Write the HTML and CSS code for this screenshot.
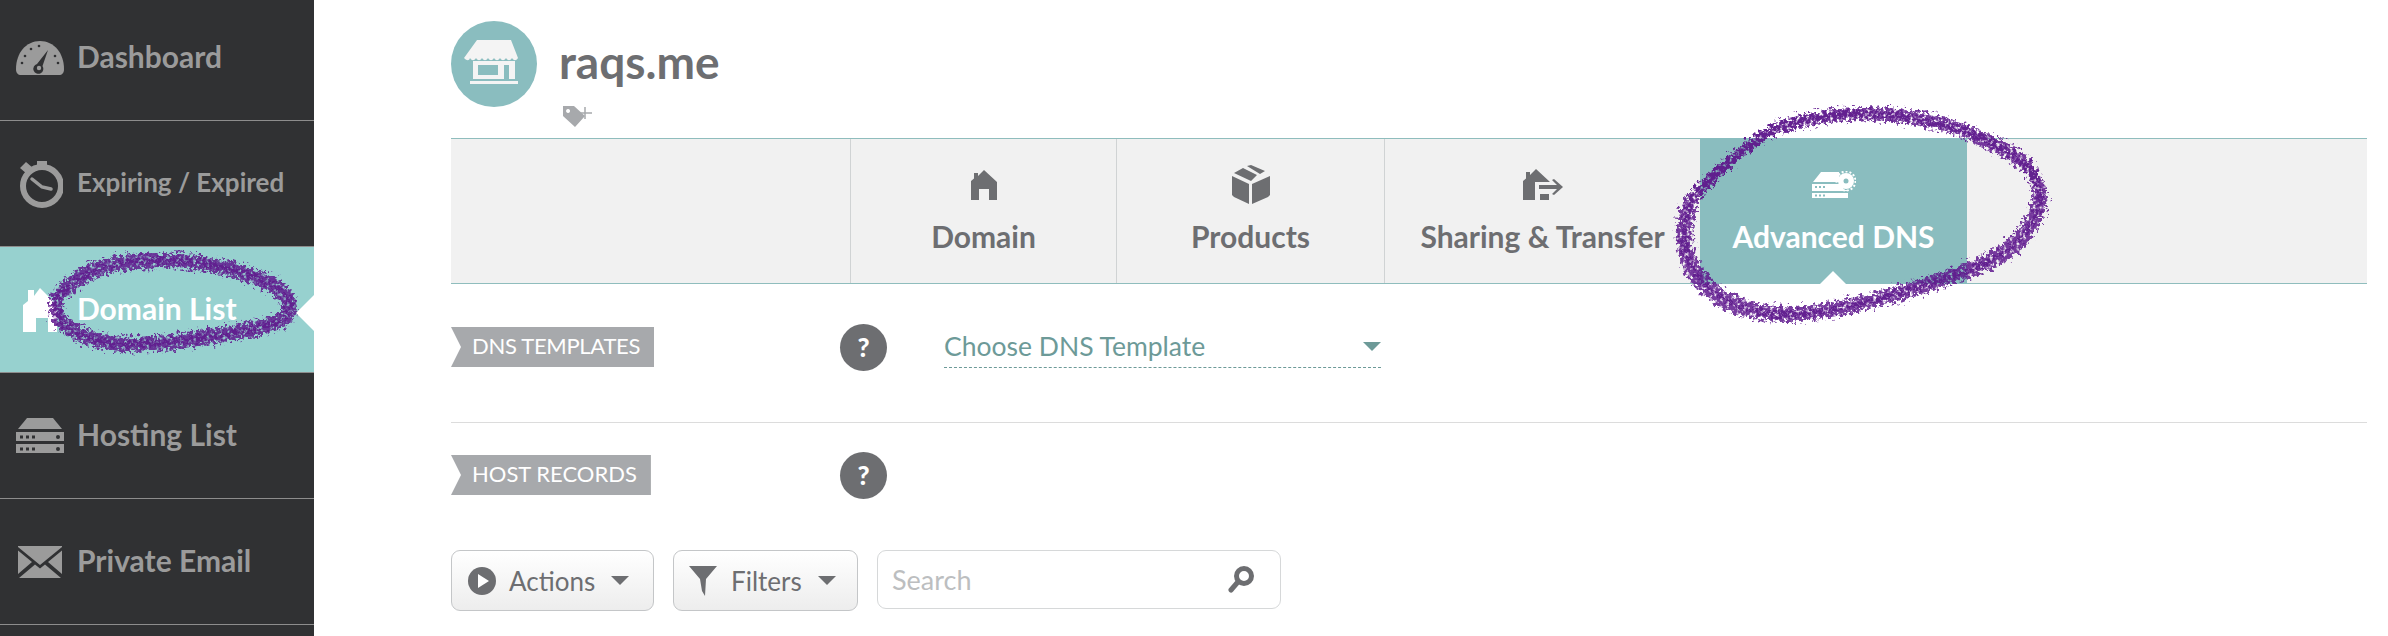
FILE: index.html
```html
<!DOCTYPE html>
<html>
<head>
    <meta charset="utf-8">
    <title>raqs.me - Advanced DNS</title>
    <link rel="stylesheet" href="styles.css">
</head>
<body>
    <nav class="sidebar">
        <a class="side-item first">
            <span class="side-icon">
                <svg width="50" height="36" viewBox="0 0 50 36"><path class="gray" d="M1 29C1 13 11 1 25 1s24 12 24 28c0 4-2 6-5 6H6c-3 0-5-2-5-6z"/><path class="dark" d="M33 10 27.500 26a5 5 0 1 1-5.500-2z"/><circle class="gray" cx="24" cy="28" r="2.200"/><g class="dark"><circle cx="7" cy="23" r="1.300"/><circle cx="10" cy="16" r="1.300"/><circle cx="16" cy="9" r="1.300"/><circle cx="24" cy="6" r="1.300"/><circle cx="40" cy="16" r="1.300"/><circle cx="43" cy="23" r="1.300"/></g></svg>
            </span>
            <span class="side-label">Dashboard</span>
        </a>
        <a class="side-item small">
            <span class="side-icon">
                <svg width="46" height="48" viewBox="0 0 46 48"><circle cx="25" cy="26" r="19" fill="none" stroke="#9b9b9b" stroke-width="6"/><path class="gray" d="M20 1h10v8H20zM3 8l6-6 7 6-6 6z"/><path d="M15 19l10 8 9 2" fill="none" stroke="#9b9b9b" stroke-width="3.500" stroke-linecap="round"/></svg>
            </span>
            <span class="side-label">Expiring / Expired</span>
        </a>
        <a class="side-item active">
            <span class="side-icon">
                <svg width="34" height="44" viewBox="0 0 34 44"><path fill="#fff" d="M0 44V17L5 13V2H11V8L17 0 34 17V44H25V30H13V44z"/></svg>
            </span>
            <span class="side-label">Domain List</span>
        </a>
        <a class="side-item">
            <span class="side-icon">
                <svg width="48" height="36" viewBox="0 0 48 36"><path class="gray" d="M11 0H37L46 11H2z"/><path class="gray" d="M0 14H48V23H0zM0 26H48V35H0z"/><g class="dark"><path d="M4 17.500h3v3H4zM10 17.500h3v3h-3zM16 17.500h3v3h-3zM4 29.500h3v3H4zM10 29.500h3v3h-3zM16 29.500h3v3h-3z"/><circle cx="42" cy="19" r="2"/><circle cx="42" cy="31" r="2"/></g></svg>
            </span>
            <span class="side-label">Hosting List</span>
        </a>
        <a class="side-item">
            <span class="side-icon">
                <svg width="44" height="32" viewBox="0 0 44 32"><path class="gray" d="M0 0H44V1L22 19 0 1zM0 4.500 14 16 0 28zM44 4.500 30 16 44 28zM17 18.500 22 22.500 27 18.500 43 32H1z"/></svg>
            </span>
            <span class="side-label">Private Email</span>
        </a>
    </nav>

    <main class="content">
        <header class="domain-head">
            <span class="domain-badge">
                <svg width="86" height="86" viewBox="0 0 86 86"><path fill="#f4f4f4" d="M26 19H60L67 37c-2 3-4 3-6 0-2 3-4 3-6 0-2 3-4 3-6 0-2 3-4 3-6 0-2 3-4 3-6 0-2 3-4 3-6 0-2 3-4 3-6 0-2 3-4 3-6 0-1 3-3 3-6 0z"/><path fill="#f4f4f4" d="M22 40H64V58H58V44H53V58H22zM27 44V54H47V44z"/><path fill="#f4f4f4" d="M19 60H67V63H19z"/></svg>
            </span>
            <div class="domain-name">
                <h1>raqs.me</h1>
                <svg class="tag-add" width="32" height="24" viewBox="0 0 32 24"><path fill="#a7a9ac" d="M1 1H12L23 11 13 22 1 11zM6 4a2 2 0 1 0 .1 0z"/><path stroke="#a7a9ac" stroke-width="1.500" d="M23 2V14M17 8H30"/></svg>
            </div>
        </header>

        <div class="tabs">
            <div class="tab tab-empty"></div>
            <a class="tab">
                <span class="tab-icon">
                    <svg width="28" height="32" viewBox="0 0 28 32"><path class="tab-fill" d="M1 31V12L4 9.500V4H8V7L14 1 27 13V31H19V20H9V31z"/></svg>
                </span>
                <span>Domain</span>
            </a>
            <a class="tab">
                <span class="tab-icon">
                    <svg width="38" height="40" viewBox="0 0 38 40"><path class="tab-fill" d="M0 11 17 19V39L2 32 0 30zM38 11 20 19V39L36 32 38 30z"/><path class="tab-fill" d="M15 1 19 0 33 6 28 9zM11 3 25 10 19 16 2 8z"/></svg>
                </span>
                <span>Products</span>
            </a>
            <a class="tab">
                <span class="tab-icon">
                    <svg width="40" height="32" viewBox="0 0 40 32"><path class="tab-fill" d="M0 31V12L3 9.500V3H7V6L13 0 27 13H12V31zM17 25H26V31H17z"/><path class="tab-fill" d="M16 16H34L29 11 31 10 40 18 31 26 29 25 34 20H16z"/></svg>
                </span>
                <span>Sharing &amp; Transfer</span>
            </a>
            <a class="tab current">
                <span class="tab-icon">
                    <svg width="44" height="28" viewBox="0 0 44 28"><path fill="#fff" d="M9 1H27V3L28 11H1zM0 13H29L32 19H36V20H0zM0 22H36V27H0z"/><g fill="#8abdbf"><path d="M3 15h2v2H3zM7 15h2v2H7zM11 15h2v2h-2zM3 23.500h2v2H3zM7 23.500h2v2H7zM11 23.500h2v2h-2z"/></g><circle cx="34" cy="10" r="8" fill="#fff"/><circle cx="34" cy="10" r="9.500" fill="none" stroke="#fff" stroke-width="2" stroke-dasharray="2 2"/><circle cx="34" cy="10" r="2.500" fill="#8abdbf"/></svg>
                </span>
                <span>Advanced DNS</span>
            </a>
            <div class="tab-rest"></div>
        </div>

        <section class="row row-templates">
            <span class="ribbon">DNS TEMPLATES</span>
            <span class="help">?</span>
            <div class="dns-select">
                <span>Choose DNS Template</span>
                <i class="caret caret-teal"></i>
            </div>
        </section>

        <section class="row row-records">
            <span class="ribbon">HOST RECORDS</span>
            <span class="help">?</span>
        </section>

        <div class="toolbar">
            <button class="btn btn-actions">
                <svg width="28" height="28" viewBox="0 0 28 28"><circle cx="14" cy="14" r="14" fill="#6d6e71"/><path fill="#fff" d="M10 7 21 14 10 21z"/></svg>
                <span>Actions</span>
                <i class="caret"></i>
            </button>
            <button class="btn btn-filters">
                <svg width="28" height="30" viewBox="0 0 28 30"><path fill="#6d6e71" d="M0 0H28L17 13 16 30 13 25 11 13z"/></svg>
                <span>Filters</span>
                <i class="caret"></i>
            </button>
            <div class="search">
                <span>Search</span>
                <svg width="26" height="28" viewBox="0 0 26 28"><circle cx="16" cy="10" r="7.500" fill="none" stroke="#6d6e71" stroke-width="5"/><path d="M9 17 3 24" stroke="#6d6e71" stroke-width="5" stroke-linecap="round"/></svg>
            </div>
        </div>
    </main>

    <!-- marker scribbles drawn on top of the screenshot -->
    <svg class="scribbles" width="2388" height="636" viewBox="0 0 2388 636">
        <defs>
            <filter id="rough" x="-10%" y="-10%" width="120%" height="120%">
                <feTurbulence type="fractalNoise" baseFrequency="0.3" numOctaves="3" seed="4" result="noise"/>
                <feDisplacementMap in="SourceGraphic" in2="noise" scale="16" xChannelSelector="R" yChannelSelector="G" result="moved"/>
                <feColorMatrix in="noise" type="matrix" values="0 0 0 0 0  0 0 0 0 0  0 0 0 0 0  0 0 0 3.600 -0.700" result="mask"/>
                <feComposite in="moved" in2="mask" operator="in"/>
                <feGaussianBlur stdDeviation="0.700"/>
            </filter>
        </defs>
        <g class="scribble" filter="url(#rough)">
            <path d="M55 297C68 280 82 272 93 267 118 258 140 258 160 258 190 258 212 262 233 267 256 273 270 280 280 287 288 294 292 300 292 307 292 314 289 319 283 323 262 331 240 335 217 338 190 343 160 346 133 347 115 347 100 345 87 340 72 334 62 328 57 320 54 312 53 304 55 297Z"/>
            <path d="M58 300C72 284 86 277 98 272 120 264 142 263 162 263 190 263 212 266 232 272 252 278 266 284 276 291 284 298 287 303 287 308 286 314 282 318 276 320 258 326 238 330 215 333 188 338 160 341 135 342 116 342 102 340 90 336 76 330 66 324 61 317 57 310 56 305 58 300Z"/>
            <path d="M1690 200C1715 172 1745 146 1773 130 1805 120 1835 115 1867 115 1900 116 1930 122 1957 130 1982 140 2002 150 2017 160 2033 172 2042 185 2043 197 2042 212 2032 232 2017 247 2000 260 1980 270 1957 277 1930 287 1900 296 1873 303 1845 310 1815 316 1790 317 1765 317 1740 312 1723 303 1700 290 1686 270 1683 250 1680 232 1682 214 1690 200Z"/>
            <path d="M1695 197C1720 168 1750 142 1778 127 1808 117 1838 111 1870 112 1902 113 1932 118 1960 127 1986 137 2006 148 2021 158 2036 170 2038 190 2037 200 2035 214 2026 230 2011 243 1996 256 1976 266 1953 273 1926 283 1896 292 1869 299 1841 306 1815 311 1792 312 1768 312 1746 306 1728 298 1706 285 1692 266 1688 248 1686 232 1688 212 1695 197Z"/>
        </g>
    </svg>
</body>
</html>
```

FILE: styles.css
```css
body {
    margin: 0;
    background: white;
    font-family: Lato, 'Open Sans', sans-serif;
    display: flex;
    width: 2388px;
    height: 636px;
    overflow: hidden;
    color: #6d6e71;
}

.gray {
    fill: #9b9b9b;
}

.dark {
    fill: #303133;
}

/* sidebar */
.sidebar {
    width: 314px;
    height: 636px;
    flex-shrink: 0;
    background: #303133;
    display: flex;
    flex-direction: column;
    overflow: hidden;
}

.side-item {
    height: 125px;
    flex-shrink: 0;
    border-bottom: 1px solid #8d8d8d;
    display: grid;
    grid-template-columns: 77px 1fr;
    align-items: center;
    font-size: 30px;
    font-weight: 700;
    color: #9b9b9b;
    position: relative;
}

.side-label {
    padding-bottom: 4px;
}

.side-item.first {
    height: 115px;
    padding-bottom: 5px;
}

.side-item.small {
    font-size: 26px;
}

.side-item.active {
    background: #97d1cf;
    color: white;
}

.side-item.active::after {
    content: '';
    position: absolute;
    right: 0;
    top: 48px;
    border: 18px solid transparent;
    border-left: 0;
    border-right-color: white;
}

.side-icon {
    display: flex;
    justify-content: center;
    padding-left: 2px;
}

/* heading */
.content {
    flex: 1;
    min-width: 0;
    height: 636px;
    padding: 21px 21px 0 137px;
}

.domain-head {
    display: flex;
    gap: 22px;
    height: 117px;
}

.domain-badge {
    width: 86px;
    height: 86px;
    border-radius: 50%;
    background: #8abdbf;
}

.domain-name h1 {
    margin: 15px 0 0 0;
    font-size: 46px;
    line-height: 52px;
    font-weight: 700;
}

.tag-add {
    display: block;
    margin: 17px 0 0 3px;
}

/* tabs */
.tabs {
    display: flex;
    height: 144px;
    background: #f1f1f1;
    border-top: 1px solid #8fbdbd;
    border-bottom: 1px solid #8fbdbd;
}

.tab {
    width: 266px;
    box-sizing: border-box;
    border-right: 1px solid #d0d3d4;
    display: flex;
    flex-direction: column;
    align-items: center;
    font-size: 30px;
    font-weight: 700;
    position: relative;
    white-space: nowrap;
}

.tab-empty {
    width: 400px;
}

.tab:nth-child(3) {
    width: 268px;
}

.tab:nth-child(4) {
    width: 315px;
    border-right: 0;
}

.tab.current {
    width: 267px;
    background: #8abdbf;
    color: white;
    border-right: 0;
    margin-top: -1px;
    margin-bottom: -1px;
    padding-top: 1px;
}

.tab.current::after {
    content: '';
    position: absolute;
    bottom: 0;
    left: 120px;
    border: 13px solid transparent;
    border-top: 0;
    border-bottom-color: white;
}

.tab-icon {
    height: 42px;
    margin-top: 25px;
    margin-bottom: 12px;
    display: flex;
    align-items: center;
}

.tab-fill {
    fill: #6d6e71;
}

.tab-rest {
    flex: 1;
}

/* rows */
.row {
    display: grid;
    grid-template-columns: 389px 104px 437px;
    align-items: start;
}

.row-templates {
    height: 138px;
    border-bottom: 1px solid #dcdcdc;
}

.row-templates .help {
    margin-top: 40px;
}

.row-records {
    height: 127px;
}

.row-records .help {
    margin-top: 29px;
}

.ribbon {
    justify-self: start;
    height: 40px;
    box-sizing: border-box;
    padding: 0 14px 0 21px;
    background: #a7a9ac;
    color: white;
    font-size: 22px;
    line-height: 38px;
    clip-path: polygon(0 0, 100% 0, 100% 100%, 0 100%, 10px 50%);
}

.row-templates .ribbon {
    margin-top: 43px;
    letter-spacing: -0.300px;
}

.row-records .ribbon {
    margin-top: 32px;
}

.help {
    width: 47px;
    height: 47px;
    border-radius: 50%;
    background: #6d6e71;
    color: white;
    font-weight: 900;
    font-size: 26px;
    line-height: 47px;
    text-align: center;
}

.dns-select {
    height: 42px;
    margin-top: 41px;
    border-bottom: 1px dashed #6d9a98;
    color: #6d9a98;
    font-size: 26.500px;
    line-height: 40px;
    display: flex;
    justify-content: space-between;
    align-items: center;
}

.caret {
    width: 0;
    height: 0;
    border-left: 9px solid transparent;
    border-right: 9px solid transparent;
    border-top: 9px solid #6d6e71;
}

.caret-teal {
    border-top-color: #6d9a98;
}

/* toolbar */
.toolbar {
    display: flex;
    align-items: flex-start;
    gap: 19px;
}

.btn {
    height: 61px;
    box-sizing: border-box;
    border: 1px solid #c4c6c8;
    border-radius: 9px;
    background: linear-gradient(#ffffff, #ededed);
    display: flex;
    align-items: center;
    padding: 0;
    font-family: inherit;
    font-size: 26px;
    color: #6d6e71;
}

.btn-actions {
    width: 203px;
    padding-left: 16px;
}

.btn-actions span {
    margin: 0 16px 0 13px;
}

.btn-filters {
    width: 185px;
    padding-left: 15px;
}

.btn-filters span {
    margin: 0 16px 0 14px;
}

.search {
    width: 404px;
    height: 59px;
    box-sizing: border-box;
    border: 1px solid #d6d8d9;
    border-radius: 9px;
    display: flex;
    justify-content: space-between;
    align-items: center;
    padding: 0 26px 0 14px;
    font-size: 27px;
    color: #bcbec0;
}

/* marker layer */
.scribbles {
    position: absolute;
    left: 0;
    top: 0;
    pointer-events: none;
}

.scribble path {
    fill: none;
    stroke: #5f1a8e;
    stroke-width: 10;
    stroke-opacity: 0.85;
}
```
